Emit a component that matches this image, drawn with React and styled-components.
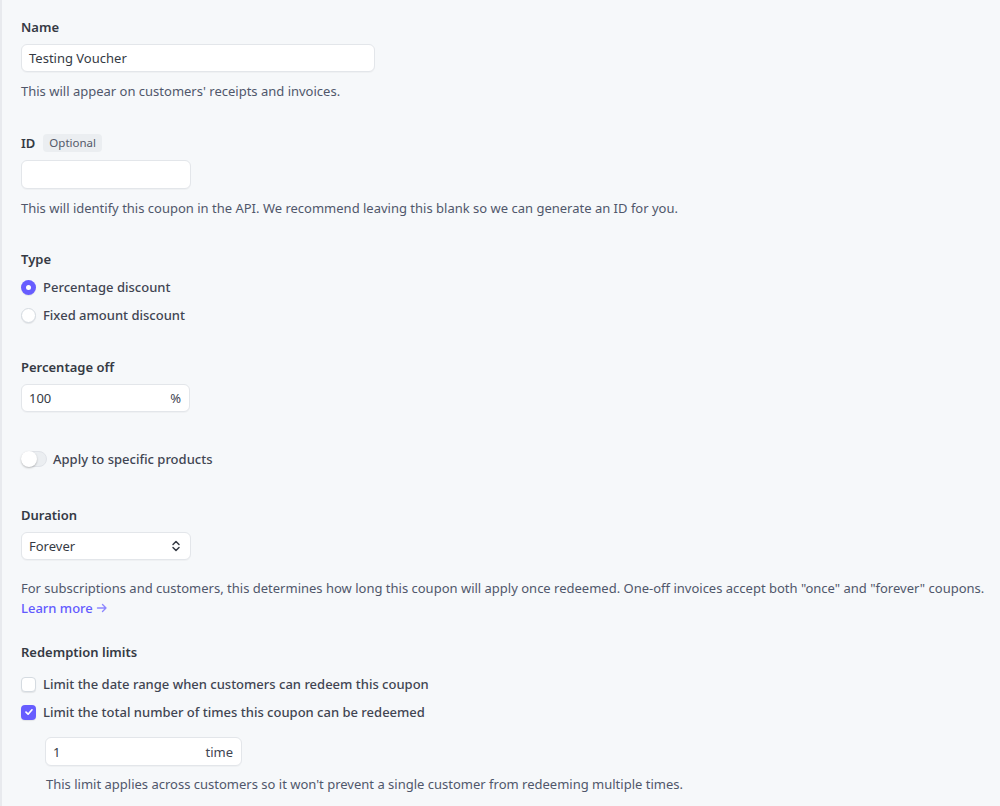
import styled, { createGlobalStyle } from 'styled-components';

const GlobalStyle = createGlobalStyle`
  html, body {
    margin: 0;
    padding: 0;
    background: #f6f8fa;
  }
  body {
    font-family: "Noto Sans", "Open Sans", sans-serif;
    color: #353a44;
    -webkit-font-smoothing: antialiased;
  }
`;

const Page = styled.div`
  min-height: 806px;
  box-sizing: border-box;
  border-left: 2px solid #e8eaee;
  padding: 17px 0 0 19px;
`;

const Section = styled.div`
  display: flex;
  flex-direction: column;
  align-items: flex-start;
  margin-bottom: ${(p) => p.$mb || 32}px;
`;

const Label = styled.div`
  display: flex;
  align-items: center;
  gap: 8px;
  font-size: 13px;
  line-height: 20px;
  font-weight: 600;
  color: #353a44;
  margin-bottom: ${(p) => p.$mb || 7}px;
`;

const Badge = styled.span`
  display: inline-block;
  padding: 1px 6px;
  border-radius: 4px;
  background: #ebeef1;
  color: #545969;
  font-size: 11.5px;
  line-height: 16px;
  font-weight: 400;
`;

const InputBox = styled.div`
  box-sizing: border-box;
  display: flex;
  align-items: center;
  width: ${(p) => p.$w}px;
  height: ${(p) => p.$h || 28}px;
  padding: 0 8px 0 7px;
  background: #fff;
  border: 1px solid #e3e6ea;
  border-radius: 6px;
  box-shadow: 0 1px 1px rgba(0, 0, 0, 0.03);
  font-size: 13px;
  color: #353a44;
  margin-left: ${(p) => p.$indent || 0}px;
  margin-top: ${(p) => p.$mt || 0}px;
`;

const Value = styled.span`
  flex: 1;
`;

const Suffix = styled.span`
  color: #414552;
  font-size: 13px;
`;

const Help = styled.div`
  font-size: 13px;
  line-height: 20px;
  color: #50576b;
  margin-top: ${(p) => p.$mt || 9}px;
  margin-left: ${(p) => p.$indent || 0}px;
`;

const LearnMore = styled.a`
  display: inline-flex;
  align-items: center;
  gap: 3px;
  font-size: 13px;
  line-height: 20px;
  color: #635bff;
  font-weight: 500;
  text-decoration: none;
`;

const OptionList = styled.div`
  display: flex;
  flex-direction: column;
  gap: 8px;
`;

const Option = styled.label`
  display: flex;
  align-items: center;
  gap: 7px;
  font-size: 13px;
  line-height: 20px;
  font-weight: 500;
  color: #414552;
`;

const Radio = styled.span`
  box-sizing: border-box;
  width: 15px;
  height: 15px;
  border-radius: 50%;
  background: ${(p) => (p.$on ? '#675dff' : '#fff')};
  border: ${(p) => (p.$on ? 'none' : '1px solid #d5dbe1')};
  box-shadow: 0 1px 1px rgba(0, 0, 0, 0.08);
  display: flex;
  align-items: center;
  justify-content: center;

  &::after {
    content: '';
    display: ${(p) => (p.$on ? 'block' : 'none')};
    width: 5px;
    height: 5px;
    border-radius: 50%;
    background: #fff;
  }
`;

const Check = styled.span`
  box-sizing: border-box;
  width: 15px;
  height: 15px;
  border-radius: 4px;
  background: ${(p) => (p.$on ? '#675dff' : '#fff')};
  border: ${(p) => (p.$on ? 'none' : '1px solid #d5dbe1')};
  box-shadow: 0 1px 1px rgba(0, 0, 0, 0.08);
  display: flex;
  align-items: center;
  justify-content: center;
`;

const ToggleRow = styled.label`
  display: flex;
  align-items: center;
  gap: 6px;
  font-size: 13px;
  line-height: 20px;
  font-weight: 500;
  color: #414552;
`;

const Track = styled.span`
  position: relative;
  box-sizing: border-box;
  width: 26px;
  height: 16px;
  border-radius: 8px;
  background: #ebeef1;
  border: 1px solid #e0e3e8;

  &::after {
    content: '';
    position: absolute;
    left: -1px;
    top: -1px;
    width: 16px;
    height: 16px;
    border-radius: 50%;
    background: #fff;
    box-shadow: 0 1px 2px rgba(0, 0, 0, 0.25);
  }
`;

function Chevrons() {
  return (
    <svg width="12" height="14" viewBox="0 0 12 14" fill="none">
      <path d="M3 5.5L6 2.5L9 5.5" stroke="#353a44" strokeWidth="1.5" strokeLinecap="round" strokeLinejoin="round" />
      <path d="M3 8.5L6 11.5L9 8.5" stroke="#353a44" strokeWidth="1.5" strokeLinecap="round" strokeLinejoin="round" />
    </svg>
  );
}

function Tick() {
  return (
    <svg width="10" height="10" viewBox="0 0 10 10" fill="none">
      <path d="M2 5.2L4.1 7.2L8 2.8" stroke="#fff" strokeWidth="1.7" strokeLinecap="round" strokeLinejoin="round" />
    </svg>
  );
}

function Arrow() {
  return (
    <svg width="12" height="12" viewBox="0 0 12 12" fill="none">
      <path d="M1.5 6H10M6.5 2.5L10 6L6.5 9.5" stroke="#8d87ff" strokeWidth="1.4" strokeLinecap="round" strokeLinejoin="round" />
    </svg>
  );
}

export default function App() {
  return (
    <>
      <GlobalStyle />
      <Page>
        <Section $mb={32}>
          <Label>Name</Label>
          <InputBox $w={354}>
            <Value>Testing Voucher</Value>
          </InputBox>
          <Help>This will appear on customers' receipts and invoices.</Help>
        </Section>

        <Section $mb={31}>
          <Label>
            ID <Badge>Optional</Badge>
          </Label>
          <InputBox $w={170} $h={29}>
            <Value />
          </InputBox>
          <Help>This will identify this coupon in the API. We recommend leaving this blank so we can generate an ID for you.</Help>
        </Section>

        <Section $mb={32}>
          <Label $mb={8}>Type</Label>
          <OptionList>
            <Option>
              <Radio $on />
              Percentage discount
            </Option>
            <Option>
              <Radio />
              Fixed amount discount
            </Option>
          </OptionList>
        </Section>

        <Section $mb={37}>
          <Label>Percentage off</Label>
          <InputBox $w={169}>
            <Value>100</Value>
            <Suffix>%</Suffix>
          </InputBox>
        </Section>

        <Section $mb={36}>
          <ToggleRow>
            <Track />
            Apply to specific products
          </ToggleRow>
        </Section>

        <Section $mb={24}>
          <Label>Duration</Label>
          <InputBox $w={170}>
            <Value>Forever</Value>
            <Chevrons />
          </InputBox>
          <Help $mt={18}>
            For subscriptions and customers, this determines how long this coupon will apply once redeemed. One-off invoices accept both "once" and "forever" coupons.
          </Help>
          <LearnMore href="#">
            Learn more <Arrow />
          </LearnMore>
        </Section>

        <Section $mb={0}>
          <Label $mb={12}>Redemption limits</Label>
          <OptionList>
            <Option>
              <Check />
              Limit the date range when customers can redeem this coupon
            </Option>
            <Option>
              <Check $on>
                <Tick />
              </Check>
              Limit the total number of times this coupon can be redeemed
            </Option>
          </OptionList>
          <InputBox $w={197} $h={29} $indent={24} $mt={15}>
            <Value>1</Value>
            <Suffix>time</Suffix>
          </InputBox>
          <Help $indent={25} $mt={8}>
            This limit applies across customers so it won't prevent a single customer from redeeming multiple times.
          </Help>
        </Section>
      </Page>
    </>
  );
}
